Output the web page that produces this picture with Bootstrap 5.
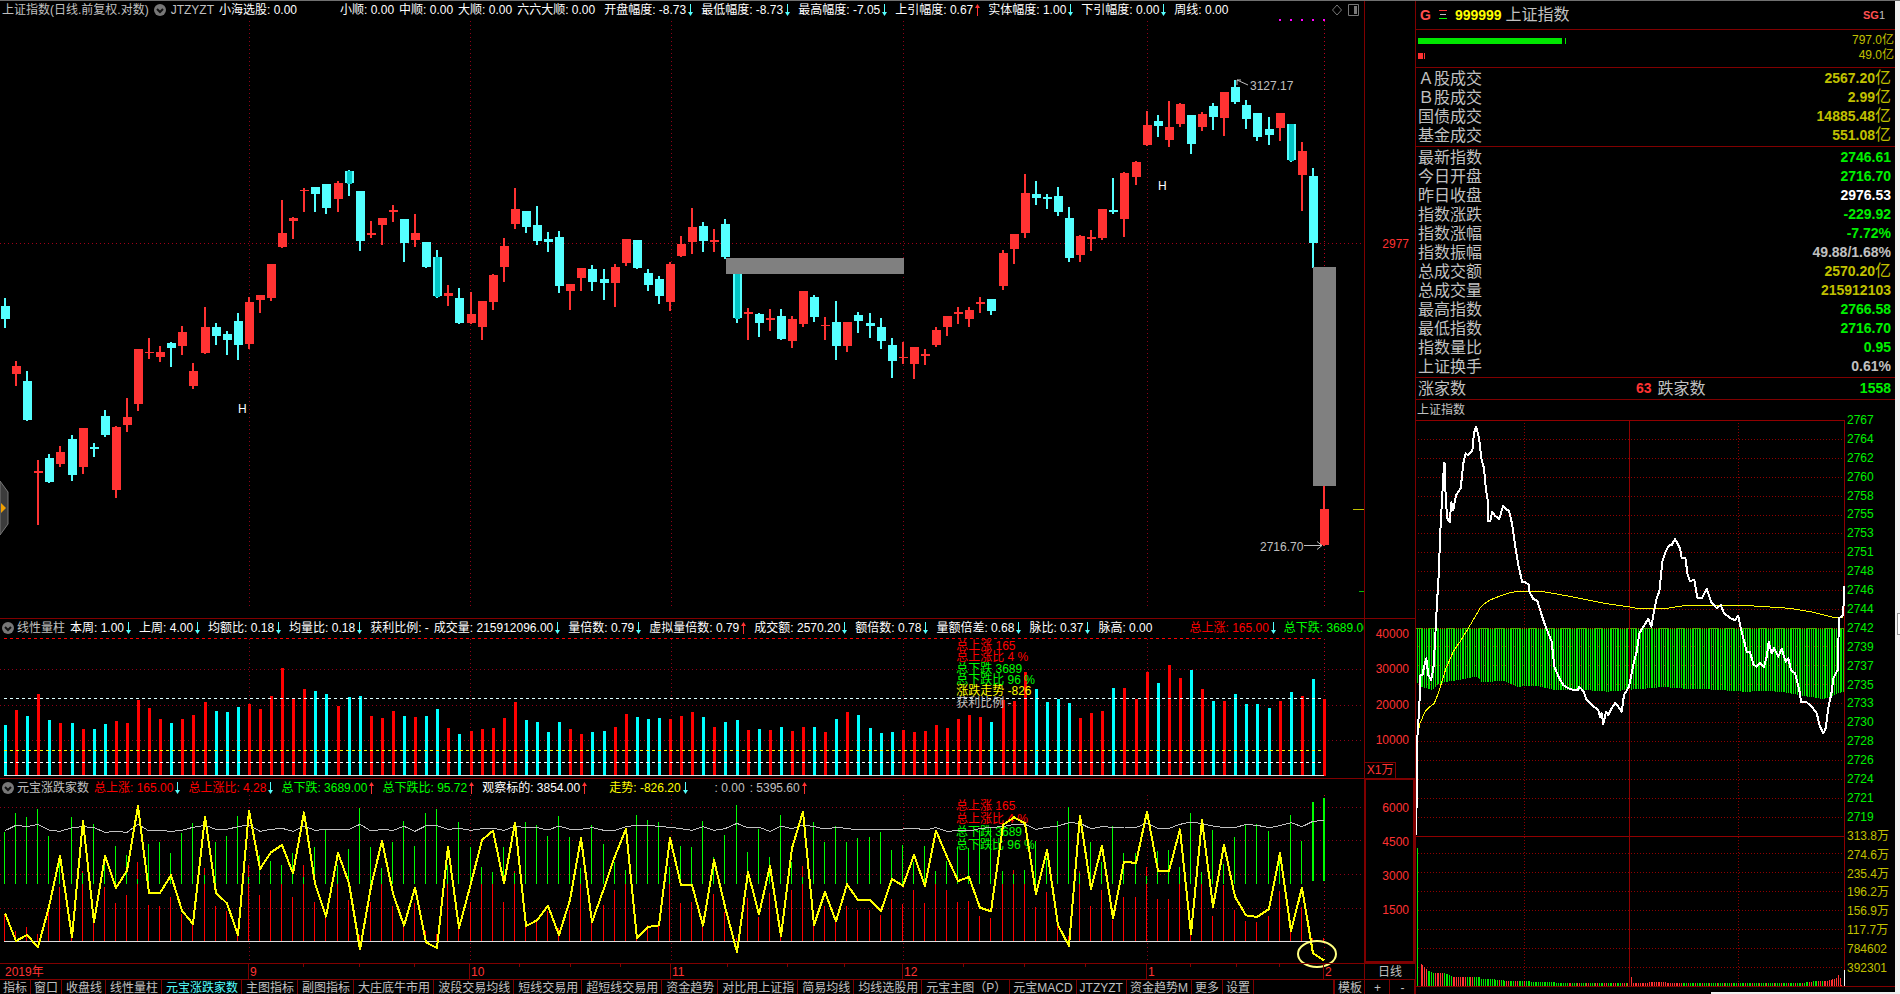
<!DOCTYPE html>
<html lang="zh-CN">
<head>
<meta charset="utf-8">
<meta name="viewport" content="width=device-width, initial-scale=1">
<title>上证指数 999999</title>
<link href="https://cdn.jsdelivr.net/npm/bootstrap@5.3.0/dist/css/bootstrap.min.css" rel="stylesheet">
<script src="https://cdn.jsdelivr.net/npm/bootstrap@5.3.0/dist/js/bootstrap.bundle.min.js"></script>
<style>
:root{--line:#800000;--red:#ff3232;--aqua:#54ffff;--lime:#00f000;--gold:#c0c000;--dim:#c0c0c0}
body{background:#000;color:#fff;font:12px/18px "Liberation Sans","Noto Sans CJK SC",sans-serif;overflow:hidden}
.terminal{height:100vh;border-top:1px solid #707070}
.main-side{display:grid;grid-template-rows:617fr 160fr 185fr 16px 15px;min-width:0}
.pane{min-height:0;min-width:0}
.pane+.pane{border-top:1px solid var(--line)}
.plot{min-width:0}
.plot>svg{flex:1 1 0;min-height:0;width:100%;display:block}
#count{overflow:visible}
.scale{width:51px;border-left:1px solid var(--line);color:var(--red);line-height:12px;padding-right:6px;text-align:right}
.scale-price{padding-top:237px}
.scale-vol{padding-top:9px}
.scale-vol .stack{height:118px}
.scale-count{padding-top:22px;border:2px solid var(--line);border-top-width:1px;padding-right:4px}
.scale-count .stack{height:114px}
.unit{border:1px solid var(--line);border-left:0;border-bottom:0;width:31px;height:16px;line-height:15px;text-align:center;margin-top:auto}
.readout{height:18px;gap:5px;white-space:nowrap;overflow:hidden;padding-left:2px;flex:none}
.readout>*{flex:none}
.toggle{width:12px;height:12px;border-radius:50%;background:#777;border:0;padding:0;line-height:0}
.toggle:first-child{margin-right:-2px}
.t-dim{color:var(--dim)}.t-red{color:var(--red)}.t-pure{color:#f00}.t-green{color:#0f0}.t-yellow{color:#ff0}
.dn::after,.up::after{content:"";display:inline-block;width:10px;height:12px;vertical-align:-2px;background:no-repeat 2px 0/5px 12px}
.dn::after{background-image:url("data:image/svg+xml,%3Csvg xmlns='http://www.w3.org/2000/svg' viewBox='0 0 5 12'%3E%3Cpath d='M2 0h1v8h2l-2.5 4L0 8h2z' fill='%2354ffff'/%3E%3C/svg%3E")}
.up::after{background-image:url("data:image/svg+xml,%3Csvg xmlns='http://www.w3.org/2000/svg' viewBox='0 0 5 12'%3E%3Cpath d='M2 12h1V4h2L2.500 0 0 4h2z' fill='%23ff3232'/%3E%3C/svg%3E")}
.gap-l{margin-left:38px}.gap-m{margin-left:15px}.gap-s{margin-left:4px}.gap-x{margin-left:32px}.gap-t{margin-left:14px}
.handle{position:absolute;left:0;top:480px;width:9px;height:54px}
.dates{border-top:1px solid var(--line)}
.dates .scale{color:var(--dim);line-height:16px;text-align:center;padding:0}
.tabs{border-top:1px solid var(--line);overflow:hidden;white-space:nowrap}
.tabs button{background:none;border:0;border-right:1px solid var(--line);color:var(--dim);padding:0 3px 0 4px;line-height:16px;height:15px;flex:none}
.tabs button.on{color:var(--aqua)}
.tabs .short{padding:0 3px}
.tabs .tool{min-width:25px}
.tabs .lead-tool{border-left:2px solid var(--line);padding:0 2px 0 3px}
.quote-side{width:480px;border-left:1px solid var(--line);flex:none}
.edge{width:5px;background:#f0f0f0;flex:none}
.ruled{border-bottom:1px solid var(--line);flex:none}
.q-title{height:29px;font-size:16px;padding:0 10px 0 4px}
.q-title b{font-size:14px}
.q-title .sg{font-size:11px}
.flows{height:38px;padding:3px 1px 0 2px;color:var(--gold);line-height:15px}
.quotes{width:100%;color:var(--dim);line-height:17px}
.quotes th{font-weight:400;font-size:16px;padding:0 0 0 2px}
.quotes td{font-weight:700;font-size:14px;text-align:right;padding:0 4px 0 0}
.quotes .u{font-weight:400;font-size:16px;line-height:14px}
.quotes tr{height:19px}
.g{color:var(--lime)}.y{color:var(--gold)}.w{color:#fff}.r{color:var(--red)}
.turnover{height:79px;padding-top:1px}.indices{height:231px;padding-top:1px}
.breadth{height:22px}
.breadth .quotes{table-layout:fixed}
.breadth .quotes,.breadth tr{height:21px}
.q-label{height:20px;padding-left:1px;color:var(--dim);line-height:21px}
.minute{flex:1 1 0;min-height:0;margin-bottom:7px;border-bottom:1px solid var(--line)}
.minute svg{flex:1 1 0;min-width:0;height:100%}
.minute-scale{width:50px;display:grid;grid-auto-rows:1fr;margin:-9px 0 8px;padding-left:2px;line-height:19px;color:var(--lime)}
.minute-scale span{height:0}
.sheet-corner{position:absolute;right:0;bottom:0;width:189px;height:2px;background:#f0f0f0}
.edge-box{position:absolute;right:0;top:612px;width:3px;height:22px;background:#fff;border:1px solid #999;border-right:0}
</style>
</head>
<body>
<div class="terminal d-flex position-relative">
  <main class="main-side flex-grow-1">
    <section class="pane d-flex">
      <div class="plot d-flex flex-column flex-grow-1">
        <div class="readout d-flex align-items-center">
          <span class="t-dim">上证指数(日线.前复权.对数)</span>
          <button class="toggle" aria-label="展开"><svg width="12" height="12" viewBox="0 0 12 12"><path d="M3 5l3 3 3-3" stroke="#111" stroke-width="2" fill="none"/></svg></button>
          <span class="t-dim">JTZYZT</span><span>小海选股: 0.00</span>
          <span class="gap-l">小顺: 0.00</span><span>中顺: 0.00</span><span>大顺: 0.00</span><span>六六大顺: 0.00</span>
          <span class="dn gap-s">开盘幅度: -8.73</span><span class="dn">最低幅度: -8.73</span><span class="dn">最高幅度: -7.05</span><span class="up">上引幅度: 0.67</span><span class="dn">实体幅度: 1.00</span><span class="dn">下引幅度: 0.00</span><span>周线: 0.00</span>
          <svg class="ms-auto me-1" width="28" height="14" viewBox="0 0 28 14" fill="none" stroke="#777"><path d="M5 2L9.500 7 5 12 .5 7z"/><path d="M16.500 1.500h10v11h-10z"/><path d="M22 3h3v8h-3z" fill="#777" stroke="none"/></svg>
        </div>
        <svg id="price" viewBox="0 19 1364 599" preserveAspectRatio="none" shape-rendering="crispEdges"></svg>
      </div>
      <div class="scale scale-price">2977</div>
    </section>
    <section class="pane d-flex">
      <div class="plot d-flex flex-column flex-grow-1">
        <div class="readout d-flex align-items-center">
          <button class="toggle" aria-label="展开"><svg width="12" height="12" viewBox="0 0 12 12"><path d="M3 5l3 3 3-3" stroke="#111" stroke-width="2" fill="none"/></svg></button>
          <span class="t-dim">线性量柱</span><span class="dn">本周: 1.00</span><span class="dn">上周: 4.00</span><span class="dn">均额比: 0.18</span><span class="dn">均量比: 0.18</span><span>获利比例: -</span><span class="dn">成交量: 215912096.00</span><span class="dn">量倍数: 0.79</span><span class="up">虚拟量倍数: 0.79</span><span class="dn">成交额: 2570.20</span><span class="dn">额倍数: 0.78</span><span class="dn">量额倍差: 0.68</span><span class="dn">脉比: 0.37</span><span>脉高: 0.00</span>
          <span class="t-pure dn gap-x">总上涨: 165.00</span><span class="t-green">总下跌: 3689.00</span>
        </div>
        <svg id="vol" viewBox="0 637 1364 141" preserveAspectRatio="none" shape-rendering="crispEdges"></svg>
      </div>
      <div class="scale scale-vol d-flex flex-column">
        <div class="stack d-flex flex-column justify-content-between"><span>40000</span><span>30000</span><span>20000</span><span>10000</span></div>
        <div class="unit">X1万</div>
      </div>
    </section>
    <section class="pane d-flex">
      <div class="plot d-flex flex-column flex-grow-1">
        <div class="readout d-flex align-items-center">
          <button class="toggle" aria-label="展开"><svg width="12" height="12" viewBox="0 0 12 12"><path d="M3 5l3 3 3-3" stroke="#111" stroke-width="2" fill="none"/></svg></button>
          <span class="t-dim">元宝涨跌家数</span><span class="t-pure dn">总上涨: 165.00</span><span class="t-pure dn">总上涨比: 4.28</span><span class="t-green up">总下跌: 3689.00</span><span class="t-green up">总下跌比: 95.72</span><span class="up">观察标的: 3854.00</span><span class="t-yellow dn gap-t">走势: -826.20</span><span class="t-dim gap-m ps-1">: 0.00</span><span class="t-dim up">: 5395.60</span>
        </div>
        <svg id="count" viewBox="0 797 1364 166" preserveAspectRatio="none" shape-rendering="crispEdges"></svg>
      </div>
      <div class="scale scale-count">
        <div class="stack d-flex flex-column justify-content-between"><span>6000</span><span>4500</span><span>3000</span><span>1500</span></div>
      </div>
    </section>
    <div class="dates d-flex">
      <div class="plot d-flex flex-grow-1"><svg id="dates" viewBox="0 964 1364 15" preserveAspectRatio="none"></svg></div>
      <div class="scale">日线</div>
    </div>
    <nav class="tabs d-flex">
      <button class="short">指标</button><button class="short">窗口</button><button>收盘线</button><button>线性量柱</button><button class="on">元宝涨跌家数</button><button>主图指标</button><button>副图指标</button><button>大庄底牛市用</button><button>波段交易均线</button><button>短线交易用</button><button>超短线交易用</button><button>资金趋势</button><button>对比用上证指</button><button>简易均线</button><button>均线选股用</button><button>元宝主图（P）</button><button class="short">元宝MACD</button><button class="short">JTZYZT</button><button class="short">资金趋势M</button><button class="short">更多</button><button class="short">设置</button>
      <button class="ms-auto lead-tool">模板</button><button class="tool">+</button><button class="tool">-</button>
    </nav>
  </main>

  <aside class="quote-side d-flex flex-column">
    <header class="q-title ruled d-flex align-items-center">
      <b style="color:#ff5050">G</b>
      <svg class="mx-2" width="8" height="10" viewBox="0 0 8 10"><path d="M0 .5h8" stroke="#ff3232"/><path d="M1 4.500h6" stroke="#c0c0c0"/><path d="M0 8.500h8" stroke="#0f0"/></svg>
      <b class="t-yellow">999999</b><span class="t-dim ms-1">上证指数</span>
      <span class="sg ms-auto t-dim"><strong style="color:#ff5050">SG</strong>1</span>
    </header>
    <div class="flows ruled">
      <div class="d-flex align-items-center justify-content-between"><svg width="150" height="6"><path d="M0 0h144v6H0zM147 0h1v6h-1z" fill="#00e600"/></svg><span>797.0亿</span></div>
      <div class="d-flex align-items-center justify-content-between"><svg width="150" height="6"><path d="M0 0h5v6H0zM6 0h1v6H6z" fill="#ff3232"/></svg><span>49.0亿</span></div>
    </div>
    <div class="turnover ruled"><table class="quotes"><tbody>
      <tr><th>Ａ股成交</th><td class="y">2567.20<span class="u">亿</span></td></tr>
      <tr><th>Ｂ股成交</th><td class="y">2.99<span class="u">亿</span></td></tr>
      <tr><th>国债成交</th><td class="y">14885.48<span class="u">亿</span></td></tr>
      <tr><th>基金成交</th><td class="y">551.08<span class="u">亿</span></td></tr>
    </tbody></table></div>
    <div class="indices ruled"><table class="quotes"><tbody>
      <tr><th>最新指数</th><td class="g">2746.61</td></tr>
      <tr><th>今日开盘</th><td class="g">2716.70</td></tr>
      <tr><th>昨日收盘</th><td class="w">2976.53</td></tr>
      <tr><th>指数涨跌</th><td class="g">-229.92</td></tr>
      <tr><th>指数涨幅</th><td class="g">-7.72%</td></tr>
      <tr><th>指数振幅</th><td>49.88/1.68%</td></tr>
      <tr><th>总成交额</th><td class="y">2570.20<span class="u">亿</span></td></tr>
      <tr><th>总成交量</th><td class="y">215912103</td></tr>
      <tr><th>最高指数</th><td class="g">2766.58</td></tr>
      <tr><th>最低指数</th><td class="g">2716.70</td></tr>
      <tr><th>指数量比</th><td class="g">0.95</td></tr>
      <tr><th>上证换手</th><td>0.61%</td></tr>
    </tbody></table></div>
    <div class="breadth ruled"><table class="quotes"><tbody>
      <tr><th>涨家数</th><td class="r">63</td><th>跌家数</th><td class="g">1558</td></tr>
    </tbody></table></div>
    <div class="q-label">上证指数</div>
    <div class="minute d-flex">
      <svg id="minute" viewBox="1416 420 429 566" preserveAspectRatio="none" shape-rendering="crispEdges"></svg>
      <div class="minute-scale" id="minuteScale"></div>
    </div>
  </aside>
  <div class="edge"></div>
  <svg class="handle" viewBox="0 0 9 54"><path d="M0 0l8 11v32L0 54z" fill="#3c3c3c" stroke="#777"/><path d="M1 22l5 5-5 5z" fill="#f0a000"/></svg>
  <div class="sheet-corner"></div>
  <div class="edge-box"></div>
</div>
<script>
const X = i => Math.round(5 + i * 11.084);
const months = [249, 470, 671, 903, 1147, 1324];
const rect = (x, y, w, h, c) => `<rect x="${x}" y="${y}" width="${w}" height="${h}" fill="${c}"/>`;
const line = (x1, y1, x2, y2, c, dash = '', w = 1) => `<path d="M${x1} ${y1}L${x2} ${y2}" stroke="${c}" stroke-width="${w}" stroke-dasharray="${dash}" fill="none"/>`;
const label = (x, y, s, c) => `<text x="${x}" y="${y}" fill="${c}" font-size="12">${s}</text>`;
const poly = (pts, c, w) => `<polyline points="${pts.join(' ')}" fill="none" stroke="${c}" stroke-width="${w}" stroke-linejoin="round"/>`;
const grid = (top, bottom) => months.map((x, i) => line(x + .5, top, x + .5, bottom, i == 5 ? '#c00020' : '#900018', '1 3')).join('');

/* candles: kind, high, body top, body bottom, low (C falling, R rising, D marked) */
const candles = `C298,306,319,328 R361,366,374,386 C371,381,420,421 R460,471,473,525 C454,458,482,483 R446,452,464,467 C435,439,475,481 R428,428,467,474 C443,447,449,457 C410,416,435,437 R426,427,490,498 R398,417,425,432
R349,349,404,411 R338,352,353,359 R346,352,357,362 C342,343,348,367 R326,332,346,355 R363,371,386,389 R307,327,353,354 C323,327,336,345 C331,334,340,355 C313,321,345,360 R297,302,344,349 R295,295,300,313
R264,264,298,301 R200,233,247,248 R217,218,221,239 R188,190,191,212 C187,187,194,212 C184,184,208,214 R181,183,199,212 D170,171,183,196 C191,191,241,251 R221,233,235,238 R218,218,225,245 R205,210,212,222
C219,219,243,262 R214,233,240,247 C242,242,267,268 D250,257,296,298 R285,293,296,306 C288,298,323,324 R292,314,323,324 R301,301,327,340 R274,275,302,310 R238,246,267,282 R188,209,224,229 C211,211,227,233
C206,225,241,245 C232,239,242,252 C231,237,286,293 R284,284,291,310 R268,268,278,291 C265,269,282,291 C269,279,283,300 R264,267,283,307 R239,239,263,266 C240,240,268,269 C269,273,285,291 C276,279,296,304
R262,264,302,311 R236,244,256,257 R208,227,242,254 C222,226,241,252 R229,240,242,252 C219,224,257,259 D273,273,318,323 R308,312,314,340 C313,314,323,337 R309,318,320,331 C309,316,339,340 R316,319,341,348
R291,291,324,327 C295,297,317,322 R317,325,326,340 C301,322,346,360 R322,322,346,352 C312,315,321,333 C313,323,326,338 C318,327,341,349 C338,345,361,378 R342,357,358,364 R347,347,364,379 R349,354,356,365
R327,330,345,347 R316,316,327,336 R307,312,314,324 R307,310,319,327 R297,302,304,313 C299,299,311,315 R250,253,286,290 R234,234,249,264 R174,193,233,238 C181,194,198,205 C194,197,199,209 C187,196,212,216
C207,218,258,262 R235,236,255,262 R230,237,239,251 R209,209,238,240 C178,210,212,214 R172,173,219,237 R161,162,177,185 R111,125,145,146 C115,121,126,137 R101,127,140,147 R103,104,124,127 C115,115,144,154
R112,114,127,131 C103,106,117,130 R92,92,118,136 C80,87,102,104 C100,105,119,129 C113,113,137,141 C117,129,135,145 R113,113,128,141 D124,124,160,162 R142,151,175,211 C168,176,243,268 R485,509,545,546`.split(/\s+/);
let s = grid(21, 607) + line(0, 243.5, 1364, 243.5, '#a00018', '1 3');
candles.forEach((c, i) => {
  const [h, t, b, l] = c.slice(1).split(',').map(Number), x = X(i), col = c[0] == 'R' ? '#ff3232' : '#54ffff';
  s += rect(x - 1, h, 2, l - h, col) + rect(x - 4, t, 9, b - t, col);
  if (c[0] == 'D') s += rect(x - 2, t, 5, b - t + 1, '#00c4c4');
});
s += rect(726, 258, 178, 16, '#808080') + rect(1313, 267, 23, 219, '#808080');
[1280, 1291, 1302, 1313, 1324].forEach(x => s += rect(x - 1, 19, 2, 2, '#f0f'));
s += label(1250, 90, '3127.17', '#c0c0c0') + label(1260, 551, '2716.70', '#c0c0c0') + label(238, 413, 'H', '#fff') + label(1158, 190, 'H', '#fff');
s += `<path d="M1248 85l-11-5m4 0h-4v5M1304 545.500h18m-5-4l5 4-5 4" fill="none" stroke="#c0c0c0" shape-rendering="auto"/>`;
s += line(1353, 509.5, 1364, 509.5, '#c0c000') + line(1359, 591.5, 1364, 591.5, '#00c000');
price.innerHTML = s;

/* sub-chart series are kept in thirds of a pixel below y = 610 */
const Y = v => 610 + v / 3;
const volume = [345,300,318,252,330,339,339,357,357,342,333,339,270,294,327,339,327,315,276,303,306,291,282,297,258,174,267,237,243,252,288,261,258,318,324,303,318,321,318,297,354,372,363,357,354,324,276,330,336,366,336,357,372,366,363,351,312,321,327,324,327,318,306,321,351,336,330,360,357,360,351,363,351,351,366,327,306,315,354,369,366,360,366,363,345,354,327,315,321,336,270,273,186,237,276,267,279,324,309,303,234,234,267,186,219,165,204,180,237,273,273,252,282,282,294,273,246,258,207,267];
s = grid(639, 776) + [669.5, 705.5, 740.5].map(y => line(0, y, 1364, y, '#900018', '1 3')).join('');
s += line(4, 638.5, 1324, 638.5, '#f00', '3 3');
volume.forEach((v, i) => s += rect(X(i) - 1, Math.round(Y(v)), 3, 776 - Math.round(Y(v)), candles[i][0] == 'R' ? '#f00' : '#0ff'));
s += line(4, 698.5, 1324, 698.5, '#dff', '3 3') + line(4, 750.5, 1324, 750.5, '#ff0', '3 3') + line(4, 762.5, 1324, 762.5, '#fff', '3 3') + line(4, 775.5, 1324, 775.5, '#e0e0e0');
[['总上涨 165', '#f00'], ['总上涨比 4 %', '#f00'], ['总下跌 3689', '#0f0'], ['总下跌比 96 %', '#0f0'], ['涨跌走势 -826', '#ff0'], ['获利比例 -', '#c0c0c0']].forEach((t, i) => s += label(956, 650 + Math.round(i * 11.3), ...t));
vol.innerHTML = s;

const trend = [910,993,975,1011,890,738,982,632,937,738,834,782,588,849,849,796,902,942,620,849,880,975,602,777,727,705,790,607,820,920,728,820,1018,830,693,850,947,833,997,1014,710,954,820,690,662,820,638,948,931,887,975,870,684,936,835,738,657,985,951,946,684,825,825,947,750,890,1026,786,913,768,979,715,605,945,846,934,823,870,870,903,807,827,735,828,662,740,813,801,893,904,645,622,640,852,720,945,1008,617,837,707,925,755,759,605,783,783,658,972,630,891,704,860,916,921,897,729,963,833,1030,1051];
const total = [662,646,650,643,660,664,653,650,653,667,664,667,643,663,661,664,661,652,646,658,658,650,645,664,658,655,664,648,661,658,658,658,643,663,658,661,649,664,647,647,658,655,661,656,655,661,649,653,653,660,648,658,658,653,661,661,650,646,646,649,652,656,661,650,661,656,640,654,652,664,648,656,645,650,657,652,655,660,657,660,658,657,654,660,653,664,662,663,656,652,650,643,643,658,652,648,638,640,656,650,652,651,652,640,655,655,643,636,641,648,653,653,643,646,653,647,638,650,634,631];
const falls = [665,609,621,597,678,757,621,790,641,757,708,735,808,702,697,729,669,639,795,696,678,618,802,735,753,765,730,802,711,660,765,717,594,711,775,697,633,708,609,597,765,636,711,770,786,711,790,636,645,678,618,681,773,645,702,755,780,615,630,636,770,708,711,633,740,675,585,726,657,741,615,755,800,636,696,648,696,684,681,666,720,705,755,708,783,753,712,715,660,655,783,792,780,693,745,633,591,790,696,755,648,730,730,798,723,720,770,609,785,660,762,681,645,642,663,750,615,693,576,564];
s = grid(795, 963) + [807.5, 840.5, 874.5, 908.5].map(y => line(0, y, 1364, y, '#900018', '1 3')).join('');
falls.forEach((g, i) => {
  const r = Math.min(985, g < 757 ? 915 - (g - 665) * .85 : 832 - (g - 757) * 1.5), x = X(i) + .5, w = i > 117 ? 2 : 1;
  s += line(x - 1, Y(r), x - 1, 941, '#f00') + line(x - 1, Y(g), x - 1, Y(w > 1 ? 812 : 823), '#0f0', '', w);
});
[['总上涨 165', '#f00'], ['总上涨比 4 %', '#f00'], ['总下跌 3689', '#0f0'], ['总下跌比 96 %', '#0f0']].forEach((t, i) => s += label(956, 810 + i * 13, ...t));
s += line(4, 941.5, 1324, 941.5, '#e0e0e0') + poly(total.map((v, i) => X(i) + ',' + Y(v)), '#c0c0c0', 1) + poly(trend.map((v, i) => X(i) + ',' + Y(v)), '#ff0', 2);
s += `<ellipse cx="1317" cy="954" rx="19" ry="13" fill="none" stroke="#ffff80" stroke-width="2" shape-rendering="auto"/>`;
count.innerHTML = s;

s = label(5, 976, '2019年', '#ff3232');
['9', '10', '11', '12', '1', '2'].forEach((m, i) => s += line(months[i] - .5, 964, months[i] - .5, 979, '#800000') + label(months[i] + 1, 976, m, '#ff3232'));
[303, 359, 414, 519, 570, 620, 727, 787, 844, 963, 1024, 1085, 1190, 1236, 1279].forEach(x => s += line(x + .5, 964, x + .5, 967, '#800000'));
dates.innerHTML = s;

/* intraday chart: points in thirds of a pixel from (1410, 395) */
const P = a => a.trim().split(' ').map(p => { const [x, y] = p.split(','); return (1410 + x / 3).toFixed(1) + ',' + (395 + y / 3).toFixed(1); });
const at = (env, x) => { let k = env.findIndex(e => e[0] >= x); if (k < 0) return env[env.length - 1][1]; if (!k) return env[0][1]; const [a, b] = env[k - 1], [c, d] = env[k]; return b + (d - b) * (x - a) / (c - a); };
s = '';
const hy = [439, 458, 477, 496, 515, 533, 552, 571, 590, 609, 646, 665, 684, 703, 722, 741, 760, 779, 798, 817, 853, 872, 891, 910, 929, 948, 967];
hy.forEach(y => s += line(1418, y + .5, 1844, y + .5, '#900000', '1 2'));
s += line(1524.5, 420, 1524.5, 986, '#900000', '1 2') + line(1738.5, 420, 1738.5, 986, '#900000', '1 2');
const depth = [[20,862],[30,875],[65,885],[80,870],[100,862],[200,845],[215,862],[280,857],[320,875],[380,872],[430,885],[520,885],[590,890],[650,885],[760,876],[850,883],[880,882],[1000,890],[1080,888],[1130,893],[1180,903],[1240,912],[1270,900],[1300,890]];
const turn = [[28,815],[40,830],[55,843],[75,850],[105,850],[130,861],[205,861],[215,867],[250,868],[300,874],[340,873],[400,877],[470,878],[480,880],[658,880],[663,861],[668,878],[760,877],[820,880],[1170,880],[1200,875],[1250,872],[1280,864],[1288,846],[1292,884]];
const runs = [[50,1],[70,0],[100,1],[125,0],[170,1],[200,2],[265,0],[345,2],[470,0],[650,2],[810,1],[1170,3],[1240,2],[1300,1]];
for (let i = 0; i < 240; i++) {
  const x = Math.round(1417 + i * 1.783), v = (x - 1410) * 3;
  s += rect(x, 628, 1, Math.round(at(depth, v) / 3 + 395 - 628), '#00e600');
  if (i > 1 && v < 1296) {
    const k = runs.find(r => v <= r[0])[1], red = k == 1 || (k == 2 && i % 5 < 2) || (k == 3 && i % 4 == 0), y = Math.round(690 + at(turn, v) / 3);
    s += rect(x, y, 1, 986 - y, red ? '#ff3232' : '#00e600');
  }
}
s += line(1416, 628.5, 1844, 628.5, '#a06000', '1 1') + rect(1417, 848, 1, 138, '#00e600') + rect(1844, 970, 1, 16, '#fff');
s += line(1416, 420.5, 1845, 420.5, '#900000') + line(1416, 836.5, 1845, 836.5, '#900000') + line(1629.5, 420, 1629.5, 986, '#900000') + line(1844.5, 420, 1844.5, 970, '#900000');
s += poly(P('22,1025 30,985 45,950 60,935 73,925 85,895 108,820 130,770 150,740 175,700 210,640 225,625 240,615 265,605 300,593 325,589 390,589 430,595 500,608 590,626 660,636 680,640 770,640 830,631 1000,631 1140,640 1210,652 1270,667 1300,667'), '#ff0', 1);
s += poly(P('19,1320 20,1170 22,1030 25,985 30,890 30,843 38,838 42,815 49,790 55,840 63,855 70,825 75,740 80,640 86,540 91,410 97,300 102,205 104,205 107,310 112,370 119,382 124,322 130,345 138,300 152,280 160,205 167,175 173,180 187,168 192,115 198,95 207,128 214,190 222,220 228,285 234,320 234,378 241,378 247,350 255,362 268,372 279,333 287,342 297,347 307,390 315,450 325,510 337,562 345,562 356,568 358,590 370,612 382,618 395,660 405,690 425,740 433,815 448,850 460,870 475,880 490,885 503,886 508,875 520,888 530,915 545,930 565,945 570,965 575,955 580,988 588,950 595,960 605,940 615,925 625,935 635,950 642,900 657,875 670,810 680,770 688,715 700,695 715,672 724,695 730,660 740,610 748,590 757,500 765,475 776,452 785,450 795,432 805,450 810,460 815,490 826,488 833,540 840,558 853,555 862,608 875,610 890,582 903,620 920,640 932,630 942,655 965,672 975,675 985,662 992,700 1003,740 1010,770 1020,770 1030,808 1040,815 1050,805 1062,815 1070,785 1076,740 1085,775 1092,760 1105,785 1115,762 1127,800 1135,790 1143,825 1155,835 1168,885 1173,920 1190,922 1205,935 1220,955 1230,995 1240,1015 1247,1000 1255,940 1265,890 1270,850 1283,825 1287,670 1300,660 1302,573'), '#fff', 2);
minute.innerHTML = s;
minuteScale.innerHTML = '2767 2764 2762 2760 2758 2755 2753 2751 2748 2746 2744 2742 2739 2737 2735 2733 2730 2728 2726 2724 2721 2719'.split(' ').map(v => `<span>${v}</span>`).join('') + '313.8万 274.6万 235.4万 196.2万 156.9万 117.7万 784602 392301'.split(' ').map(v => `<span class="y">${v}</span>`).join('');
</script>
</body>
</html>
